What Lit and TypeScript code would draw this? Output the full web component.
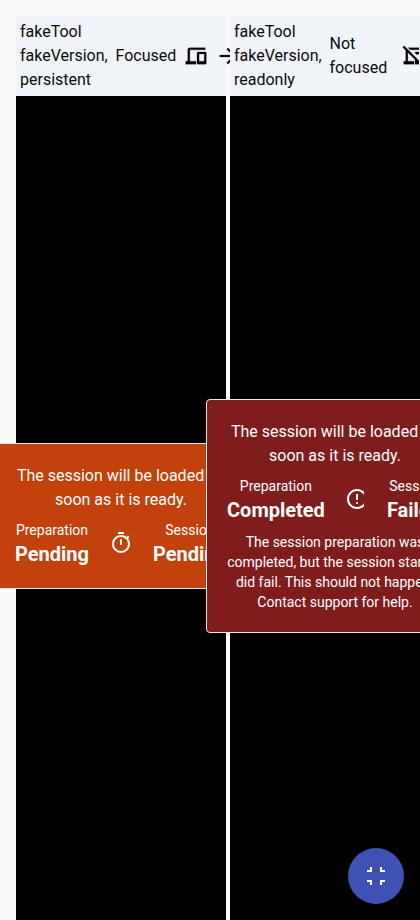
import { LitElement, html, css, svg, nothing } from "lit";
import { customElement, property } from "lit/decorators.js";

const ICONS: Record<string, string> = {
  devices:
    "M80-160v-120h80v-440q0-33 23.5-56.5T240-800h600v80H240v440h240v120H80Zm480 0q-17 0-28.5-11.5T520-200v-400q0-17 11.5-28.5T560-640h280q17 0 28.5 11.5T880-600v400q0 17-11.5 28.5T840-160H560Zm40-120h200v-280H600v280Z",
  devicesOff:
    "M80-160v-120h80v-460l80 80v380h240v120H80ZM97-877 906-68l-57 57L40-820l57-57ZM330-720l-80-80h590v80H330Zm270 206-80-80v-6q0-17 11.5-28.5T560-640h280q17 0 28.5 11.5T880-600v400l-80-80v-280H600v46ZM520-160v-280l80 80v80h80l120 120H520Z",
  arrow: "M647-440H160v-80h487L423-744l57-56 320 320-320 320-57-56 224-224Z",
  timer:
    "M360-840v-80h240v80H360Zm80 440h80v-240h-80v240Zm40 320q-74 0-139.5-28.5T226-186q-49-49-77.5-114.5T120-440q0-74 28.5-139.5T226-694q49-49 114.5-77.5T480-800q62 0 119 20t107 58l56-56 56 56-56 56q38 50 58 107t20 119q0 74-28.5 139.5T734-186q-49 49-114.5 77.5T480-80Zm0-80q116 0 198-82t82-198q0-116-82-198t-198-82q-116 0-198 82t-82 198q0 116 82 198t198 82Z",
  error:
    "M480-280q17 0 28.500-11.500T520-320q0-17-11.500-28.500T480-360q-17 0-28.500 11.500T440-320q0 17 11.500 28.500T480-280Zm-40-160h80v-240h-80v240Zm40 360q-83 0-156-31.500T197-197q-54-54-85.500-127T80-480q0-83 31.500-156T197-763q54-54 127-85.500T480-880q83 0 156 31.500T763-763q54 54 85.500 127T880-480q0 83-31.500 156T763-197q-54 54-127 85.500T480-80Zm0-80q134 0 227-93t93-227q0-134-93-227t-227-93q-134 0-227 93t-93 227q0 134 93 227t227 93Z",
  fullscreenExit:
    "M240-120v-120H120v-80h200v200h-80Zm400 0v-200h200v80H720v120h-80ZM120-640v-80h120v-120h80v200H120Zm520 0v-200h80v120h120v80H640Z",
};

const icon = (name: string) => html`<svg
  class="icon"
  viewBox="0 -960 960 960"
  width="24"
  height="24"
  aria-hidden="true"
>
  ${svg`<path fill="currentColor" d=${ICONS[name]}></path>`}
</svg>`;

@customElement("session-header")
class SessionHeader extends LitElement {
  @property() version = "";
  @property() focusLabel = "";
  @property() focusIcon = "devices";
  @property({ type: Boolean, reflect: true }) readonly = false;

  static styles = css`
    :host {
      display: flex;
      align-items: center;
      gap: 8px;
      height: 80px;
      padding: 4px;
      box-sizing: border-box;
      border-radius: 4px 4px 0 0;
      background: #f0f4f9;
      color: #0b0b0c;
    }
    .version {
      width: 87.5px;
      flex: none;
    }
    .focus {
      flex: none;
      width: 60.5px;
    }
    :host([readonly]) .focus {
      width: 64.5px;
    }
    .tools {
      display: flex;
      gap: 8px;
    }
    .icon {
      display: block;
      flex: none;
      color: #000;
      stroke: currentColor;
      stroke-width: 9;
      transform: scale(1.03);
    }
    :host([readonly]) .tools {
      width: 17px;
      overflow: hidden;
    }
  `;

  render() {
    return html`
      <div class="version">fakeTool fakeVersion, ${this.version}</div>
      <div class="focus">${this.focusLabel.split("\n").map((t, i) => (i ? html`<br />${t}` : t))}</div>
      <div class="tools">${icon(this.focusIcon)}${icon("arrow")}</div>
    `;
  }
}

@customElement("session-status")
class SessionStatus extends LitElement {
  @property() preparation = "";
  @property() session = "";
  @property() icon = "timer";
  @property({ attribute: false }) detail: string[] = [];
  @property({ type: Boolean, reflect: true }) failed = false;

  static styles = css`
    :host {
      display: flex;
      flex-direction: column;
      align-items: center;
      gap: 8px;
      flex: none;
      width: 254px;
      box-sizing: border-box;
      padding: 20px;
      border: 1px solid #e5e7eb;
      border-radius: 4px;
      background: #c2410c;
      color: #fff;
      text-align: center;
      white-space: nowrap;
    }
    :host([failed]) {
      width: 258px;
      background: #7f1d1d;
    }
    .row {
      display: flex;
      align-items: center;
      gap: 20px;
      width: 100%;
    }
    .label {
      font-size: 14px;
      line-height: 20px;
    }
    .value {
      font-size: 20px;
      line-height: 28px;
      font-weight: 700;
    }
    .mark {
      flex: none;
      width: 24px;
      height: 24px;
      margin-bottom: 2px;
      overflow: hidden;
    }
    :host([failed]) .mark {
      width: 19px;
      margin-right: 3px;
    }
    .icon {
      display: block;
    }
    .detail {
      font-size: 14px;
      line-height: 20px;
    }
  `;

  render() {
    return html`
      <div class="message">The session will be loaded as<br />soon as it is ready.</div>
      <div class="row">
        <div>
          <div class="label">Preparation</div>
          <div class="value">${this.preparation}</div>
        </div>
        <div class="mark">${icon(this.icon)}</div>
        <div>
          <div class="label">Session</div>
          <div class="value">${this.session}</div>
        </div>
      </div>
      ${this.detail.length
        ? html`<div class="detail">${this.detail.map((line) => html`<div>${line}</div>`)}</div>`
        : nothing}
    `;
  }
}

@customElement("app-root")
class AppRoot extends LitElement {
  static styles = css`
    :host {
      display: block;
      height: 920px;
      box-sizing: border-box;
      padding: 16px 0 0 16px;
      overflow: hidden;
      position: relative;
      background: #fafafa;
      font-family: Roboto, sans-serif;
      font-size: 16px;
      line-height: 24px;
    }
    .sessions {
      display: grid;
      grid-template-columns: 210px 210px;
      gap: 4px;
      width: 424px;
    }
    .panel {
      position: relative;
    }
    .screen {
      display: flex;
      align-items: center;
      justify-content: center;
      height: 840px;
      background: #000;
    }
    .fab {
      position: absolute;
      right: 16px;
      bottom: 16px;
      z-index: 1;
      display: flex;
      align-items: center;
      justify-content: center;
      width: 56px;
      height: 56px;
      padding: 0;
      border: 0;
      border-radius: 50%;
      background: #3f51b5;
      color: #fff;
    }
  `;

  render() {
    return html`
      <div class="sessions">
        <div class="panel">
          <session-header version="persistent" focusLabel="Focused" focusIcon="devices"></session-header>
          <div class="screen">
            <session-status preparation="Pending" session="Pending" icon="timer"></session-status>
          </div>
        </div>
        <div class="panel">
          <session-header
            readonly
            version="readonly"
            .focusLabel=${"Not\nfocused"}
            focusIcon="devicesOff"
          ></session-header>
          <div class="screen">
            <session-status
              failed
              preparation="Completed"
              session="Failed"
              icon="error"
              .detail=${[
                "The session preparation was",
                "completed, but the session startup",
                "did fail. This should not happen.",
                "Contact support for help.",
              ]}
            ></session-status>
          </div>
        </div>
      </div>
      <button class="fab" aria-label="Exit fullscreen">${icon("fullscreenExit")}</button>
    `;
  }
}
